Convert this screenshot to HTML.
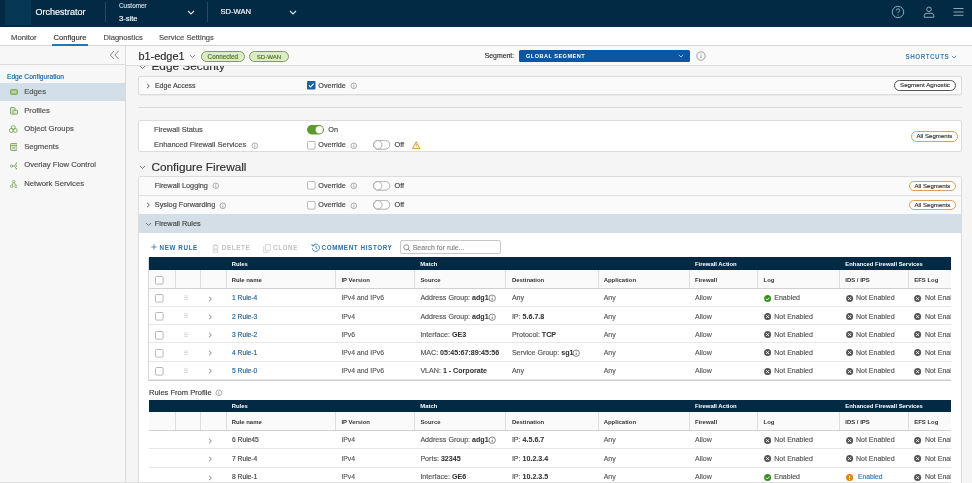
<!DOCTYPE html><html><head><meta charset="utf-8"><style>
html,body{margin:0;padding:0;width:972px;height:483px;overflow:hidden;background:#f5f5f5;}
body{position:relative;font-family:"Liberation Sans",sans-serif;-webkit-font-smoothing:antialiased;}
#root{position:absolute;left:0;top:0;width:972px;height:483px;will-change:transform;}
.t{position:absolute;white-space:nowrap;-webkit-text-stroke:0.15px currentColor;}
.b{position:absolute;display:block;}
</style></head><body><div id="root">
<div class="b" style="left:0px;top:0px;width:972px;height:27px;background:#022a45"></div>
<div class="b" style="left:5px;top:0px;width:26px;height:25px;background:#063753"></div>
<div class="t" style="left:35.5px;top:1.60px;line-height:20px;font-size:9.0px;color:#ffffff;font-weight:400;letter-spacing:0px;">Orchestrator</div>
<div class="b" style="left:105px;top:2px;width:1px;height:20px;background:#2a4a63"></div>
<div class="t" style="left:119px;top:-3.60px;line-height:20px;font-size:6.4px;color:#d5dee6;font-weight:400;letter-spacing:0px;">Customer</div>
<div class="t" style="left:119px;top:8.90px;line-height:20px;font-size:7.6px;color:#ffffff;font-weight:400;letter-spacing:0px;">3-site</div>
<svg class="b" style="left:186.7px;top:10px;" width="8" height="5" viewBox="0 0 8 5"><path d="M1 1 L4 4 L7 1" stroke="#dfe7ee" stroke-width="1.1" fill="none"/></svg>
<div class="b" style="left:207px;top:2px;width:1px;height:20px;background:#2a4a63"></div>
<div class="t" style="left:220.5px;top:2.20px;line-height:20px;font-size:7.6px;color:#ffffff;font-weight:400;letter-spacing:0px;">SD-WAN</div>
<svg class="b" style="left:289px;top:10px;" width="8" height="5" viewBox="0 0 8 5"><path d="M1 1 L4 4 L7 1" stroke="#dfe7ee" stroke-width="1.1" fill="none"/></svg>
<svg class="b" style="left:891px;top:5px;" width="14" height="14" viewBox="0 0 14 14"><circle cx="7" cy="7" r="5.7" stroke="#9fb4c4" stroke-width="0.9" fill="none"/><path d="M5.2 5.6 Q5.2 3.8 7 3.8 Q8.8 3.8 8.8 5.4 Q8.8 6.5 7.4 7 Q7 7.3 7 8.2" stroke="#9fb4c4" stroke-width="0.9" fill="none"/><circle cx="7" cy="10" r="0.55" fill="#9fb4c4"/></svg>
<svg class="b" style="left:922px;top:5px;" width="14" height="14" viewBox="0 0 14 14"><circle cx="7" cy="4.3" r="2.3" stroke="#9fb4c4" stroke-width="0.9" fill="none"/><path d="M2.2 12.3 L2.2 10.6 Q2.2 8.3 5 8.3 L9 8.3 Q11.8 8.3 11.8 10.6 L11.8 12.3 Z" stroke="#9fb4c4" stroke-width="0.9" fill="none"/></svg>
<svg class="b" style="left:953px;top:7px;" width="12" height="10" viewBox="0 0 12 10"><path d="M0.5 1.5 H10.5 M0.5 5 H10.5 M0.5 8.3 H10.5" stroke="#9fb4c4" stroke-width="0.9"/></svg>
<div class="b" style="left:0px;top:27px;width:972px;height:18px;background:#ffffff"></div>
<div class="b" style="left:0px;top:45px;width:972px;height:1px;background:#d6d6d6"></div>
<div class="t" style="left:11px;top:27.50px;line-height:20px;font-size:7.7px;color:#4a4a4a;font-weight:400;letter-spacing:0px;">Monitor</div>
<div class="t" style="left:53.5px;top:27.50px;line-height:20px;font-size:7.6px;color:#333333;font-weight:400;letter-spacing:0px;">Configure</div>
<div class="b" style="left:52px;top:44px;width:36px;height:2px;background:#1f77b4"></div>
<div class="t" style="left:103.5px;top:27.50px;line-height:20px;font-size:7.6px;color:#4a4a4a;font-weight:400;letter-spacing:0px;">Diagnostics</div>
<div class="t" style="left:159px;top:27.50px;line-height:20px;font-size:7.6px;color:#4a4a4a;font-weight:400;letter-spacing:0px;">Service Settings</div>
<div class="b" style="left:0px;top:46px;width:125px;height:437px;background:#f7f7f7"></div>
<div class="b" style="left:125px;top:46px;width:1px;height:437px;background:#d9d9d9"></div>
<div class="b" style="left:0px;top:64px;width:125px;height:1px;background:#dcdcdc"></div>
<svg class="b" style="left:109px;top:50px;" width="11" height="10" viewBox="0 0 11 10"><path d="M5 1 L1.3 5 L5 9 M9.5 1 L5.8 5 L9.5 9" stroke="#777" stroke-width="0.9" fill="none"/></svg>
<div class="t" style="left:7px;top:66.70px;line-height:20px;font-size:6.65px;color:#1a65a5;font-weight:500;letter-spacing:0px;">Edge Configuration</div>
<div class="b" style="left:0px;top:83px;width:125px;height:18px;background:#d2dee8"></div>
<div class="t" style="left:24.2px;top:82.30px;line-height:20px;font-size:7.7px;color:#4e4e4e;font-weight:400;letter-spacing:0px;">Edges</div>
<div class="t" style="left:24.2px;top:100.90px;line-height:20px;font-size:7.7px;color:#4e4e4e;font-weight:400;letter-spacing:0px;">Profiles</div>
<div class="t" style="left:24.2px;top:119.00px;line-height:20px;font-size:7.7px;color:#4e4e4e;font-weight:400;letter-spacing:0px;">Object Groups</div>
<div class="t" style="left:24.2px;top:137.40px;line-height:20px;font-size:7.7px;color:#4e4e4e;font-weight:400;letter-spacing:0px;">Segments</div>
<div class="t" style="left:24.2px;top:155.30px;line-height:20px;font-size:7.7px;color:#4e4e4e;font-weight:400;letter-spacing:0px;">Overlay Flow Control</div>
<div class="t" style="left:24.2px;top:173.50px;line-height:20px;font-size:7.7px;color:#4e4e4e;font-weight:400;letter-spacing:0px;">Network Services</div>
<svg class="b" style="left:9.6px;top:89.2px;" width="8" height="6" viewBox="0 0 8 6"><rect x="0.5" y="0.5" width="7" height="5" rx="1" stroke="#84ad60" stroke-width="1.0" fill="#9cc07c"/><path d="M2 3 H6" stroke="#e6efdc" stroke-width="0.9"/></svg>
<svg class="b" style="left:9.5px;top:107px;" width="8" height="7.5" viewBox="0 0 8 7.5"><rect x="0.5" y="0.5" width="4.6" height="6.5" rx="0.6" stroke="#84ad60" stroke-width="1.0" fill="#dbe8cf"/><rect x="3" y="3.3" width="4.5" height="3.8" rx="0.6" stroke="#84ad60" stroke-width="1.0" fill="#dbe8cf"/></svg>
<svg class="b" style="left:9.3px;top:125px;" width="8.5" height="8" viewBox="0 0 8.5 8"><circle cx="4.25" cy="2.6" r="2.0" stroke="#84ad60" stroke-width="1.0" fill="none"/><circle cx="2.4" cy="5.4" r="2.0" stroke="#84ad60" stroke-width="1.0" fill="none"/><circle cx="6.1" cy="5.4" r="2.0" stroke="#84ad60" stroke-width="1.0" fill="none"/></svg>
<svg class="b" style="left:9.6px;top:143.2px;" width="7.6" height="8" viewBox="0 0 7.6 8"><rect x="0.5" y="0.5" width="6.6" height="7" rx="0.8" stroke="#84ad60" stroke-width="1.0" fill="#dbe8cf"/><path d="M0.5 2.6 H7.1 M2.3 5 H5.3" stroke="#84ad60" stroke-width="1.0"/></svg>
<svg class="b" style="left:9.5px;top:161.5px;" width="7.5" height="8" viewBox="0 0 7.5 8"><circle cx="1.6" cy="4" r="1.2" stroke="#84ad60" stroke-width="0.9" fill="none"/><path d="M2.8 4 H4.4 M4.4 4 L6.4 1.3 M4.4 4 L6.4 6.7" stroke="#84ad60" stroke-width="0.9" fill="none"/><circle cx="6.5" cy="1.2" r="0.8" fill="#84ad60"/><circle cx="6.5" cy="6.8" r="0.8" fill="#84ad60"/><circle cx="6.5" cy="4" r="0.8" fill="#84ad60"/></svg>
<svg class="b" style="left:9.6px;top:179.8px;" width="7.6" height="8" viewBox="0 0 7.6 8"><circle cx="3.8" cy="1.6" r="1.2" stroke="#84ad60" stroke-width="0.9" fill="none"/><circle cx="1.6" cy="6.3" r="1.3" stroke="#84ad60" stroke-width="0.9" fill="none"/><circle cx="6" cy="6.3" r="1.3" stroke="#84ad60" stroke-width="0.9" fill="none"/><path d="M3.2 2.8 L2.3 5 M4.4 2.8 L5.3 5" stroke="#84ad60" stroke-width="0.9"/></svg>
<div class="b" style="left:126px;top:46px;width:846px;height:437px;background:#f5f5f5"></div>
<div class="t" style="left:151.5px;top:55.90px;line-height:20px;font-size:11.8px;color:#2d2d2d;font-weight:400;letter-spacing:0px;">Edge Security</div>
<svg class="b" style="left:139px;top:64.6px;" width="7" height="5" viewBox="0 0 7 5"><path d="M1 1 L3.5 3.5 L6 1" stroke="#666" stroke-width="0.9" fill="none"/></svg>
<div class="b" style="left:138px;top:75.5px;width:824px;height:19px;background:#fafafa;border:1px solid #dcdcdc;border-radius:2px;box-sizing:border-box;box-shadow:0 0.6px 0 #e2e2e2"></div>
<svg class="b" style="left:146px;top:82.5px;" width="5" height="6" viewBox="0 0 5 6"><path d="M1 0.8 L3.4 3 L1 5.2" stroke="#555" stroke-width="0.9" fill="none"/></svg>
<div class="t" style="left:154.9px;top:75.50px;line-height:20px;font-size:7.05px;color:#444;font-weight:500;letter-spacing:0px;">Edge Access</div>
<svg class="b" style="left:307px;top:81.3px;" width="9" height="9" viewBox="0 0 9 9"><rect x="0" y="0" width="8.5" height="8.5" rx="1" fill="#1b5fa6"/><path d="M2 4.4 L3.6 6 L6.6 2.6" stroke="#fff" stroke-width="1.1" fill="none"/></svg>
<div class="t" style="left:318.3px;top:75.60px;line-height:20px;font-size:7.2px;color:#444;font-weight:400;letter-spacing:0px;">Override</div>
<svg class="b" style="left:350.2px;top:82.2px;" width="7.6" height="7.6" viewBox="0 0 7.6 7.6"><circle cx="3.8" cy="3.8" r="2.8" stroke="#8a8a8a" stroke-width="0.7" fill="none"/><path d="M3.8 3.4 V5.4799999999999995" stroke="#8a8a8a" stroke-width="0.8"/><circle cx="3.8" cy="2.4" r="0.45" fill="#8a8a8a"/></svg>
<div class="b" style="left:894px;top:80px;width:62px;height:10.8px;background:#fff;border:1px solid #555;border-radius:6px;box-sizing:border-box"></div>
<div class="t" style="left:900px;top:75.40px;line-height:20px;font-size:6.2px;color:#333;font-weight:400;letter-spacing:0px;">Segment Agnostic</div>
<div class="b" style="left:138px;top:107px;width:824px;height:1px;background:#dadada"></div>
<div class="b" style="left:138px;top:120px;width:824px;height:31.5px;background:#ffffff;border:1px solid #dcdcdc;border-radius:2px;box-sizing:border-box"></div>
<div class="t" style="left:154px;top:119.60px;line-height:20px;font-size:7.45px;color:#4a4a4a;font-weight:400;letter-spacing:0px;">Firewall Status</div>
<svg class="b" style="left:306.8px;top:125px;" width="18" height="10" viewBox="0 0 18 10"><rect x="0" y="0" width="17" height="9.4" rx="4.7" fill="#5b9a2e"/><circle cx="12.3" cy="4.7" r="3.7" fill="#fff"/></svg>
<div class="t" style="left:328.3px;top:119.60px;line-height:20px;font-size:7.3px;color:#444;font-weight:400;letter-spacing:0px;">On</div>
<div class="t" style="left:154px;top:135.20px;line-height:20px;font-size:7.47px;color:#4a4a4a;font-weight:400;letter-spacing:0px;">Enhanced Firewall Services</div>
<svg class="b" style="left:251.2px;top:141.89999999999998px;" width="7.6" height="7.6" viewBox="0 0 7.6 7.6"><circle cx="3.8" cy="3.8" r="2.8" stroke="#8a8a8a" stroke-width="0.7" fill="none"/><path d="M3.8 3.4 V5.4799999999999995" stroke="#8a8a8a" stroke-width="0.8"/><circle cx="3.8" cy="2.4" r="0.45" fill="#8a8a8a"/></svg>
<svg class="b" style="left:307px;top:141px;" width="9" height="9" viewBox="0 0 9 9"><rect x="0.5" y="0.5" width="7.6" height="7.6" rx="1" fill="#fff" stroke="#a8a8a8" stroke-width="0.8"/></svg>
<div class="t" style="left:318.3px;top:135.20px;line-height:20px;font-size:7.2px;color:#444;font-weight:400;letter-spacing:0px;">Override</div>
<svg class="b" style="left:349.7px;top:141.89999999999998px;" width="7.6" height="7.6" viewBox="0 0 7.6 7.6"><circle cx="3.8" cy="3.8" r="2.8" stroke="#8a8a8a" stroke-width="0.7" fill="none"/><path d="M3.8 3.4 V5.4799999999999995" stroke="#8a8a8a" stroke-width="0.8"/><circle cx="3.8" cy="2.4" r="0.45" fill="#8a8a8a"/></svg>
<svg class="b" style="left:372.9px;top:140.2px;" width="18" height="10" viewBox="0 0 18 10"><rect x="0.4" y="0.4" width="16.4" height="8.8" rx="4.4" fill="#fff" stroke="#9a9a9a" stroke-width="0.8"/><circle cx="4.8" cy="4.8" r="4.2" fill="#fff" stroke="#9a9a9a" stroke-width="0.8"/></svg>
<div class="t" style="left:394.5px;top:135.20px;line-height:20px;font-size:7.3px;color:#444;font-weight:400;letter-spacing:0px;">Off</div>
<svg class="b" style="left:411.5px;top:141px;" width="10" height="9" viewBox="0 0 10 9"><path d="M4.2 0.8 L7.9 7.6 H0.5 Z" stroke="#d08a1c" stroke-width="0.9" fill="none" stroke-linejoin="round"/><path d="M4.2 3.1 V5.3" stroke="#d08a1c" stroke-width="0.9"/><circle cx="4.2" cy="6.4" r="0.45" fill="#d08a1c"/></svg>
<div class="b" style="left:910.7px;top:131px;width:47px;height:10.6px;background:#fff;border:1px solid #d9a15c;border-radius:6px;box-sizing:border-box"></div>
<div class="t" style="left:916.5px;top:126.30px;line-height:20px;font-size:6.1px;color:#333;font-weight:400;letter-spacing:0px;">All Segments</div>
<div class="t" style="left:151.4px;top:156.50px;line-height:20px;font-size:11.8px;color:#2d2d2d;font-weight:400;letter-spacing:0px;">Configure Firewall</div>
<svg class="b" style="left:139px;top:165px;" width="7" height="5" viewBox="0 0 7 5"><path d="M1 1 L3.5 3.5 L6 1" stroke="#666" stroke-width="0.9" fill="none"/></svg>
<div class="b" style="left:138px;top:176px;width:824px;height:310px;background:#ffffff;border:1px solid #dcdcdc;border-radius:2px;box-sizing:border-box"></div>
<div class="b" style="left:139px;top:177px;width:822px;height:18px;background:#fafafa"></div>
<div class="b" style="left:139px;top:195px;width:822px;height:1px;background:#e0e0e0"></div>
<div class="b" style="left:139px;top:196px;width:822px;height:18px;background:#fafafa"></div>
<div class="b" style="left:139px;top:214px;width:822px;height:18.6px;background:#d3dee7"></div>
<div class="t" style="left:154.8px;top:175.60px;line-height:20px;font-size:7.3px;color:#444;font-weight:500;letter-spacing:0px;">Firewall Logging</div>
<svg class="b" style="left:211.7px;top:182.2px;" width="7.6" height="7.6" viewBox="0 0 7.6 7.6"><circle cx="3.8" cy="3.8" r="2.8" stroke="#8a8a8a" stroke-width="0.7" fill="none"/><path d="M3.8 3.4 V5.4799999999999995" stroke="#8a8a8a" stroke-width="0.8"/><circle cx="3.8" cy="2.4" r="0.45" fill="#8a8a8a"/></svg>
<svg class="b" style="left:307px;top:181.3px;" width="9" height="9" viewBox="0 0 9 9"><rect x="0.5" y="0.5" width="7.6" height="7.6" rx="1" fill="#fff" stroke="#a8a8a8" stroke-width="0.8"/></svg>
<div class="t" style="left:318.3px;top:175.60px;line-height:20px;font-size:7.2px;color:#444;font-weight:400;letter-spacing:0px;">Override</div>
<svg class="b" style="left:349.7px;top:182.2px;" width="7.6" height="7.6" viewBox="0 0 7.6 7.6"><circle cx="3.8" cy="3.8" r="2.8" stroke="#8a8a8a" stroke-width="0.7" fill="none"/><path d="M3.8 3.4 V5.4799999999999995" stroke="#8a8a8a" stroke-width="0.8"/><circle cx="3.8" cy="2.4" r="0.45" fill="#8a8a8a"/></svg>
<svg class="b" style="left:372.9px;top:180.8px;" width="18" height="10" viewBox="0 0 18 10"><rect x="0.4" y="0.4" width="16.4" height="8.8" rx="4.4" fill="#fff" stroke="#9a9a9a" stroke-width="0.8"/><circle cx="4.8" cy="4.8" r="4.2" fill="#fff" stroke="#9a9a9a" stroke-width="0.8"/></svg>
<div class="t" style="left:394.5px;top:175.60px;line-height:20px;font-size:7.3px;color:#444;font-weight:400;letter-spacing:0px;">Off</div>
<div class="b" style="left:908.6px;top:180.8px;width:47px;height:10.4px;background:#fff;border:1px solid #d9a15c;border-radius:6px;box-sizing:border-box"></div>
<div class="t" style="left:914.5px;top:176.00px;line-height:20px;font-size:6.1px;color:#333;font-weight:400;letter-spacing:0px;">All Segments</div>
<svg class="b" style="left:146px;top:201.6px;" width="5" height="6" viewBox="0 0 5 6"><path d="M1 0.8 L3.4 3 L1 5.2" stroke="#555" stroke-width="0.9" fill="none"/></svg>
<div class="t" style="left:154.8px;top:195.00px;line-height:20px;font-size:7.3px;color:#444;font-weight:500;letter-spacing:0px;">Syslog Forwarding</div>
<svg class="b" style="left:218.7px;top:201.6px;" width="7.6" height="7.6" viewBox="0 0 7.6 7.6"><circle cx="3.8" cy="3.8" r="2.8" stroke="#8a8a8a" stroke-width="0.7" fill="none"/><path d="M3.8 3.4 V5.4799999999999995" stroke="#8a8a8a" stroke-width="0.8"/><circle cx="3.8" cy="2.4" r="0.45" fill="#8a8a8a"/></svg>
<svg class="b" style="left:307px;top:200.8px;" width="9" height="9" viewBox="0 0 9 9"><rect x="0.5" y="0.5" width="7.6" height="7.6" rx="1" fill="#fff" stroke="#a8a8a8" stroke-width="0.8"/></svg>
<div class="t" style="left:318.3px;top:195.00px;line-height:20px;font-size:7.2px;color:#444;font-weight:400;letter-spacing:0px;">Override</div>
<svg class="b" style="left:349.7px;top:201.6px;" width="7.6" height="7.6" viewBox="0 0 7.6 7.6"><circle cx="3.8" cy="3.8" r="2.8" stroke="#8a8a8a" stroke-width="0.7" fill="none"/><path d="M3.8 3.4 V5.4799999999999995" stroke="#8a8a8a" stroke-width="0.8"/><circle cx="3.8" cy="2.4" r="0.45" fill="#8a8a8a"/></svg>
<svg class="b" style="left:372.9px;top:200.3px;" width="18" height="10" viewBox="0 0 18 10"><rect x="0.4" y="0.4" width="16.4" height="8.8" rx="4.4" fill="#fff" stroke="#9a9a9a" stroke-width="0.8"/><circle cx="4.8" cy="4.8" r="4.2" fill="#fff" stroke="#9a9a9a" stroke-width="0.8"/></svg>
<div class="t" style="left:394.5px;top:195.00px;line-height:20px;font-size:7.3px;color:#444;font-weight:400;letter-spacing:0px;">Off</div>
<div class="b" style="left:908.6px;top:199.9px;width:47px;height:10.2px;background:#fff;border:1px solid #d9a15c;border-radius:6px;box-sizing:border-box"></div>
<div class="t" style="left:914.5px;top:195.00px;line-height:20px;font-size:6.1px;color:#333;font-weight:400;letter-spacing:0px;">All Segments</div>
<svg class="b" style="left:145px;top:221.8px;" width="7" height="5" viewBox="0 0 7 5"><path d="M1 1 L3.5 3.5 L6 1" stroke="#666" stroke-width="0.9" fill="none"/></svg>
<div class="t" style="left:154.8px;top:213.90px;line-height:20px;font-size:7.3px;color:#444;font-weight:500;letter-spacing:0px;">Firewall Rules</div>
<svg class="b" style="left:150.5px;top:244.4px;" width="6" height="6" viewBox="0 0 6 6"><path d="M3 0.3 V5.7 M0.3 3 H5.7" stroke="#2f6f9f" stroke-width="0.75"/></svg>
<div class="t" style="left:159.5px;top:237.80px;line-height:20px;font-size:6.3px;color:#2a6fa8;font-weight:700;letter-spacing:0.6px;-webkit-text-stroke:0;">NEW RULE</div>
<svg class="b" style="left:212px;top:243.5px;" width="7" height="9" viewBox="0 0 7 9"><path d="M0.5 1.8 H6.5 M2.5 1.8 V0.6 H4.5 V1.8 M1.2 2.2 V8.3 H5.8 V2.2 M2.8 3.5 V7 M4.2 3.5 V7" stroke="#c4c4c4" stroke-width="0.7" fill="none"/></svg>
<div class="t" style="left:221.8px;top:237.80px;line-height:20px;font-size:6.3px;color:#c0c0c0;font-weight:700;letter-spacing:0.6px;-webkit-text-stroke:0;">DELETE</div>
<svg class="b" style="left:263px;top:243.5px;" width="8" height="9" viewBox="0 0 8 9"><path d="M2.5 0.6 H7.3 V6.7 H2.5 Z M0.7 2.4 V8.4 H5.5" stroke="#c4c4c4" stroke-width="0.7" fill="none"/></svg>
<div class="t" style="left:273px;top:237.80px;line-height:20px;font-size:6.3px;color:#c0c0c0;font-weight:700;letter-spacing:0.6px;-webkit-text-stroke:0;">CLONE</div>
<svg class="b" style="left:310.5px;top:243.3px;" width="10" height="9" viewBox="0 0 10 9"><path d="M2 2.6 A3.6 3.6 0 1 1 1.3 5.2" stroke="#2a6fa8" stroke-width="0.8" fill="none"/><path d="M0.7 1 L1.6 3.2 L3.6 2.3" stroke="#2a6fa8" stroke-width="0.8" fill="none"/><path d="M5 2.8 V5 L6.4 6" stroke="#2a6fa8" stroke-width="0.8" fill="none"/></svg>
<div class="t" style="left:321.5px;top:237.80px;line-height:20px;font-size:6.3px;color:#2a6fa8;font-weight:700;letter-spacing:0.6px;-webkit-text-stroke:0;">COMMENT HISTORY</div>
<div class="b" style="left:399.6px;top:239.7px;width:101.4px;height:14.7px;background:#fff;border:1px solid #c8c8c8;border-radius:2px;box-sizing:border-box"></div>
<svg class="b" style="left:403px;top:243.5px;" width="8" height="8" viewBox="0 0 8 8"><circle cx="3.3" cy="3.3" r="2.6" stroke="#777" stroke-width="0.8" fill="none"/><path d="M5.2 5.2 L7.4 7.4" stroke="#777" stroke-width="0.8"/></svg>
<div class="t" style="left:412.7px;top:237.50px;line-height:20px;font-size:7.0px;color:#888;font-weight:400;letter-spacing:0px;">Search for rule...</div>
<div class="b" style="left:148.4px;top:257.2px;width:802.6px;height:124.3px;background:#d8d8d8;border-radius:2px"></div>
<div class="b" style="left:149.2px;top:257.2px;width:801.8px;height:122.5px;background:#fff"></div>
<div class="b" style="left:149.2px;top:257.2px;width:801.8px;height:12.5px;background:#022a45"></div>
<div class="t" style="left:231.7px;top:253.65px;line-height:20px;font-size:5.9px;color:#ffffff;font-weight:700;letter-spacing:0px;-webkit-text-stroke:0;">Rules</div>
<div class="t" style="left:420.3px;top:253.65px;line-height:20px;font-size:5.9px;color:#ffffff;font-weight:700;letter-spacing:0px;-webkit-text-stroke:0;">Match</div>
<div class="t" style="left:695px;top:253.65px;line-height:20px;font-size:5.9px;color:#ffffff;font-weight:700;letter-spacing:0px;-webkit-text-stroke:0;">Firewall Action</div>
<div class="t" style="left:845.3px;top:253.65px;line-height:20px;font-size:5.9px;color:#ffffff;font-weight:700;letter-spacing:0px;-webkit-text-stroke:0;">Enhanced Firewall Services</div>
<div class="b" style="left:149.2px;top:269.7px;width:801.8px;height:19px;background:#fafafa"></div>
<div class="b" style="left:149.2px;top:287.7px;width:801.8px;height:1px;background:#d0d0d0"></div>
<div class="b" style="left:174.7px;top:269.7px;width:0.8px;height:18px;background:#dedede"></div>
<div class="b" style="left:200.4px;top:269.7px;width:0.8px;height:18px;background:#dedede"></div>
<div class="b" style="left:225.5px;top:269.7px;width:0.8px;height:18px;background:#dedede"></div>
<div class="b" style="left:335.1px;top:269.7px;width:0.8px;height:18px;background:#dedede"></div>
<div class="b" style="left:413.6px;top:269.7px;width:0.8px;height:18px;background:#dedede"></div>
<div class="b" style="left:505.3px;top:269.7px;width:0.8px;height:18px;background:#dedede"></div>
<div class="b" style="left:597.5px;top:269.7px;width:0.8px;height:18px;background:#dedede"></div>
<div class="b" style="left:688.9px;top:269.7px;width:0.8px;height:18px;background:#dedede"></div>
<div class="b" style="left:757.4px;top:269.7px;width:0.8px;height:18px;background:#dedede"></div>
<div class="b" style="left:839px;top:269.7px;width:0.8px;height:18px;background:#dedede"></div>
<div class="b" style="left:907.5px;top:269.7px;width:0.8px;height:18px;background:#dedede"></div>
<svg class="b" style="left:155.3px;top:275.59999999999997px;" width="9" height="9" viewBox="0 0 9 9"><rect x="0.5" y="0.5" width="7.6" height="7.6" rx="1" fill="#fff" stroke="#a8a8a8" stroke-width="0.8"/></svg>
<div class="t" style="left:231.7px;top:269.50px;line-height:20px;font-size:5.95px;color:#333;font-weight:700;letter-spacing:0px;-webkit-text-stroke:0;">Rule name</div>
<div class="t" style="left:341.4px;top:269.50px;line-height:20px;font-size:5.95px;color:#333;font-weight:700;letter-spacing:0px;-webkit-text-stroke:0;">IP Version</div>
<div class="t" style="left:420.4px;top:269.50px;line-height:20px;font-size:5.95px;color:#333;font-weight:700;letter-spacing:0px;-webkit-text-stroke:0;">Source</div>
<div class="t" style="left:511.9px;top:269.50px;line-height:20px;font-size:5.95px;color:#333;font-weight:700;letter-spacing:0px;-webkit-text-stroke:0;">Destination</div>
<div class="t" style="left:603.7px;top:269.50px;line-height:20px;font-size:5.95px;color:#333;font-weight:700;letter-spacing:0px;-webkit-text-stroke:0;">Application</div>
<div class="t" style="left:695px;top:269.50px;line-height:20px;font-size:5.95px;color:#333;font-weight:700;letter-spacing:0px;-webkit-text-stroke:0;">Firewall</div>
<div class="t" style="left:763.6px;top:269.50px;line-height:20px;font-size:5.95px;color:#333;font-weight:700;letter-spacing:0px;-webkit-text-stroke:0;">Log</div>
<div class="t" style="left:845.3px;top:269.50px;line-height:20px;font-size:5.95px;color:#333;font-weight:700;letter-spacing:0px;-webkit-text-stroke:0;">IDS / IPS</div>
<div class="t" style="left:914.2px;top:269.50px;line-height:20px;font-size:5.95px;color:#333;font-weight:700;letter-spacing:0px;-webkit-text-stroke:0;">EFS Log</div>
<div class="b" style="left:149.2px;top:288.7px;width:801.8px;height:18.2px;background:#fff"></div>
<div class="b" style="left:149.2px;top:305.9px;width:801.8px;height:0.8px;background:#e8e8e8"></div>
<svg class="b" style="left:155.3px;top:294.1px;" width="9" height="9" viewBox="0 0 9 9"><rect x="0.5" y="0.5" width="7.6" height="7.6" rx="1" fill="#fff" stroke="#a8a8a8" stroke-width="0.8"/></svg>
<svg class="b" style="left:183.5px;top:295.1px;" width="4" height="6" viewBox="0 0 4 6"><path d="M1 0.5 V5.5 M3 0.5 V5.5" stroke="#9a9a9a" stroke-width="0.8" stroke-dasharray="0.9 0.8"/></svg>
<svg class="b" style="left:207.5px;top:295.5px;" width="5" height="6" viewBox="0 0 5 6"><path d="M1 0.8 L3.4 3 L1 5.2" stroke="#777" stroke-width="0.9" fill="none"/></svg>
<div class="t" style="left:232px;top:288.30px;line-height:20px;font-size:6.7px;color:#1b64a0;font-weight:400;letter-spacing:0px;">1 Rule-4</div>
<div class="t" style="left:341.4px;top:288.30px;line-height:20px;font-size:6.85px;color:#555;font-weight:400;letter-spacing:0px;-webkit-text-stroke:0.12px #555;">IPv4 and IPv6</div>
<div class="t" style="left:420.4px;top:288.30px;line-height:20px;font-size:7.1px;color:#555">Address Group: <b style="color:#333;font-weight:700;-webkit-text-stroke:0.05px #333">adg1</b></div>
<svg class="b" style="left:488.40000000000003px;top:294.3px;" width="8.4" height="8.4" viewBox="0 0 8.4 8.4"><circle cx="4.2" cy="4.2" r="3.2" stroke="#555" stroke-width="0.7" fill="none"/><path d="M4.2 3.8000000000000003 V6.12" stroke="#555" stroke-width="0.8"/><circle cx="4.2" cy="2.6" r="0.45" fill="#555"/></svg>
<div class="t" style="left:511.9px;top:288.30px;line-height:20px;font-size:7.1px;color:#555">Any<b style="color:#333;font-weight:700;-webkit-text-stroke:0.05px #333"></b></div>
<div class="t" style="left:603.7px;top:288.30px;line-height:20px;font-size:7.0px;color:#555;font-weight:400;letter-spacing:0px;-webkit-text-stroke:0.12px #555;">Any</div>
<div class="t" style="left:695px;top:288.30px;line-height:20px;font-size:7.0px;color:#555;font-weight:400;letter-spacing:0px;-webkit-text-stroke:0.12px #555;">Allow</div>
<svg class="b" style="left:763.8px;top:294.7px;" width="8" height="8" viewBox="0 0 8 8"><circle cx="3.6" cy="3.6" r="3.5" fill="#3d8f22"/><path d="M1.9 3.7 L3.2 5 L5.4 2.6" stroke="#fff" stroke-width="0.9" fill="none"/></svg>
<div class="t" style="left:774.3px;top:288.30px;line-height:20px;font-size:7.0px;color:#555;font-weight:400;letter-spacing:0px;">Enabled</div>
<svg class="b" style="left:845.5px;top:294.7px;" width="8" height="8" viewBox="0 0 8 8"><circle cx="3.6" cy="3.6" r="3.5" fill="#555"/><path d="M2.2 2.2 L5 5 M5 2.2 L2.2 5" stroke="#fff" stroke-width="0.9"/></svg>
<div class="t" style="left:856.0px;top:288.30px;line-height:20px;font-size:7.0px;color:#555;font-weight:400;letter-spacing:0px;">Not Enabled</div>
<svg class="b" style="left:914.4px;top:294.7px;" width="8" height="8" viewBox="0 0 8 8"><circle cx="3.6" cy="3.6" r="3.5" fill="#555"/><path d="M2.2 2.2 L5 5 M5 2.2 L2.2 5" stroke="#fff" stroke-width="0.9"/></svg>
<div class="t" style="left:924.9px;top:288.30px;line-height:20px;font-size:7.0px;color:#555;font-weight:400;letter-spacing:0px;">Not Enabled</div>
<div class="b" style="left:149.2px;top:306.9px;width:801.8px;height:18.2px;background:#fff"></div>
<div class="b" style="left:149.2px;top:324.09999999999997px;width:801.8px;height:0.8px;background:#e8e8e8"></div>
<svg class="b" style="left:155.3px;top:312.3px;" width="9" height="9" viewBox="0 0 9 9"><rect x="0.5" y="0.5" width="7.6" height="7.6" rx="1" fill="#fff" stroke="#a8a8a8" stroke-width="0.8"/></svg>
<svg class="b" style="left:183.5px;top:313.3px;" width="4" height="6" viewBox="0 0 4 6"><path d="M1 0.5 V5.5 M3 0.5 V5.5" stroke="#9a9a9a" stroke-width="0.8" stroke-dasharray="0.9 0.8"/></svg>
<svg class="b" style="left:207.5px;top:313.7px;" width="5" height="6" viewBox="0 0 5 6"><path d="M1 0.8 L3.4 3 L1 5.2" stroke="#777" stroke-width="0.9" fill="none"/></svg>
<div class="t" style="left:232px;top:306.50px;line-height:20px;font-size:6.7px;color:#1b64a0;font-weight:400;letter-spacing:0px;">2 Rule-3</div>
<div class="t" style="left:341.4px;top:306.50px;line-height:20px;font-size:6.85px;color:#555;font-weight:400;letter-spacing:0px;-webkit-text-stroke:0.12px #555;">IPv4</div>
<div class="t" style="left:420.4px;top:306.50px;line-height:20px;font-size:7.1px;color:#555">Address Group: <b style="color:#333;font-weight:700;-webkit-text-stroke:0.05px #333">adg1</b></div>
<svg class="b" style="left:488.40000000000003px;top:312.5px;" width="8.4" height="8.4" viewBox="0 0 8.4 8.4"><circle cx="4.2" cy="4.2" r="3.2" stroke="#555" stroke-width="0.7" fill="none"/><path d="M4.2 3.8000000000000003 V6.12" stroke="#555" stroke-width="0.8"/><circle cx="4.2" cy="2.6" r="0.45" fill="#555"/></svg>
<div class="t" style="left:511.9px;top:306.50px;line-height:20px;font-size:7.1px;color:#555">IP: <b style="color:#333;font-weight:700;-webkit-text-stroke:0.05px #333">5.6.7.8</b></div>
<div class="t" style="left:603.7px;top:306.50px;line-height:20px;font-size:7.0px;color:#555;font-weight:400;letter-spacing:0px;-webkit-text-stroke:0.12px #555;">Any</div>
<div class="t" style="left:695px;top:306.50px;line-height:20px;font-size:7.0px;color:#555;font-weight:400;letter-spacing:0px;-webkit-text-stroke:0.12px #555;">Allow</div>
<svg class="b" style="left:763.8px;top:312.9px;" width="8" height="8" viewBox="0 0 8 8"><circle cx="3.6" cy="3.6" r="3.5" fill="#555"/><path d="M2.2 2.2 L5 5 M5 2.2 L2.2 5" stroke="#fff" stroke-width="0.9"/></svg>
<div class="t" style="left:774.3px;top:306.50px;line-height:20px;font-size:7.0px;color:#555;font-weight:400;letter-spacing:0px;">Not Enabled</div>
<svg class="b" style="left:845.5px;top:312.9px;" width="8" height="8" viewBox="0 0 8 8"><circle cx="3.6" cy="3.6" r="3.5" fill="#555"/><path d="M2.2 2.2 L5 5 M5 2.2 L2.2 5" stroke="#fff" stroke-width="0.9"/></svg>
<div class="t" style="left:856.0px;top:306.50px;line-height:20px;font-size:7.0px;color:#555;font-weight:400;letter-spacing:0px;">Not Enabled</div>
<svg class="b" style="left:914.4px;top:312.9px;" width="8" height="8" viewBox="0 0 8 8"><circle cx="3.6" cy="3.6" r="3.5" fill="#555"/><path d="M2.2 2.2 L5 5 M5 2.2 L2.2 5" stroke="#fff" stroke-width="0.9"/></svg>
<div class="t" style="left:924.9px;top:306.50px;line-height:20px;font-size:7.0px;color:#555;font-weight:400;letter-spacing:0px;">Not Enabled</div>
<div class="b" style="left:149.2px;top:325.09999999999997px;width:801.8px;height:18.2px;background:#fff"></div>
<div class="b" style="left:149.2px;top:342.29999999999995px;width:801.8px;height:0.8px;background:#e8e8e8"></div>
<svg class="b" style="left:155.3px;top:330.5px;" width="9" height="9" viewBox="0 0 9 9"><rect x="0.5" y="0.5" width="7.6" height="7.6" rx="1" fill="#fff" stroke="#a8a8a8" stroke-width="0.8"/></svg>
<svg class="b" style="left:183.5px;top:331.5px;" width="4" height="6" viewBox="0 0 4 6"><path d="M1 0.5 V5.5 M3 0.5 V5.5" stroke="#9a9a9a" stroke-width="0.8" stroke-dasharray="0.9 0.8"/></svg>
<svg class="b" style="left:207.5px;top:331.9px;" width="5" height="6" viewBox="0 0 5 6"><path d="M1 0.8 L3.4 3 L1 5.2" stroke="#777" stroke-width="0.9" fill="none"/></svg>
<div class="t" style="left:232px;top:324.70px;line-height:20px;font-size:6.7px;color:#1b64a0;font-weight:400;letter-spacing:0px;">3 Rule-2</div>
<div class="t" style="left:341.4px;top:324.70px;line-height:20px;font-size:6.85px;color:#555;font-weight:400;letter-spacing:0px;-webkit-text-stroke:0.12px #555;">IPv6</div>
<div class="t" style="left:420.4px;top:324.70px;line-height:20px;font-size:7.1px;color:#555">Interface: <b style="color:#333;font-weight:700;-webkit-text-stroke:0.05px #333">GE3</b></div>
<div class="t" style="left:511.9px;top:324.70px;line-height:20px;font-size:7.1px;color:#555">Protocol: <b style="color:#333;font-weight:700;-webkit-text-stroke:0.05px #333">TCP</b></div>
<div class="t" style="left:603.7px;top:324.70px;line-height:20px;font-size:7.0px;color:#555;font-weight:400;letter-spacing:0px;-webkit-text-stroke:0.12px #555;">Any</div>
<div class="t" style="left:695px;top:324.70px;line-height:20px;font-size:7.0px;color:#555;font-weight:400;letter-spacing:0px;-webkit-text-stroke:0.12px #555;">Allow</div>
<svg class="b" style="left:763.8px;top:331.09999999999997px;" width="8" height="8" viewBox="0 0 8 8"><circle cx="3.6" cy="3.6" r="3.5" fill="#555"/><path d="M2.2 2.2 L5 5 M5 2.2 L2.2 5" stroke="#fff" stroke-width="0.9"/></svg>
<div class="t" style="left:774.3px;top:324.70px;line-height:20px;font-size:7.0px;color:#555;font-weight:400;letter-spacing:0px;">Not Enabled</div>
<svg class="b" style="left:845.5px;top:331.09999999999997px;" width="8" height="8" viewBox="0 0 8 8"><circle cx="3.6" cy="3.6" r="3.5" fill="#555"/><path d="M2.2 2.2 L5 5 M5 2.2 L2.2 5" stroke="#fff" stroke-width="0.9"/></svg>
<div class="t" style="left:856.0px;top:324.70px;line-height:20px;font-size:7.0px;color:#555;font-weight:400;letter-spacing:0px;">Not Enabled</div>
<svg class="b" style="left:914.4px;top:331.09999999999997px;" width="8" height="8" viewBox="0 0 8 8"><circle cx="3.6" cy="3.6" r="3.5" fill="#555"/><path d="M2.2 2.2 L5 5 M5 2.2 L2.2 5" stroke="#fff" stroke-width="0.9"/></svg>
<div class="t" style="left:924.9px;top:324.70px;line-height:20px;font-size:7.0px;color:#555;font-weight:400;letter-spacing:0px;">Not Enabled</div>
<div class="b" style="left:149.2px;top:343.29999999999995px;width:801.8px;height:18.2px;background:#fff"></div>
<div class="b" style="left:149.2px;top:360.49999999999994px;width:801.8px;height:0.8px;background:#e8e8e8"></div>
<svg class="b" style="left:155.3px;top:348.7px;" width="9" height="9" viewBox="0 0 9 9"><rect x="0.5" y="0.5" width="7.6" height="7.6" rx="1" fill="#fff" stroke="#a8a8a8" stroke-width="0.8"/></svg>
<svg class="b" style="left:183.5px;top:349.7px;" width="4" height="6" viewBox="0 0 4 6"><path d="M1 0.5 V5.5 M3 0.5 V5.5" stroke="#9a9a9a" stroke-width="0.8" stroke-dasharray="0.9 0.8"/></svg>
<svg class="b" style="left:207.5px;top:350.09999999999997px;" width="5" height="6" viewBox="0 0 5 6"><path d="M1 0.8 L3.4 3 L1 5.2" stroke="#777" stroke-width="0.9" fill="none"/></svg>
<div class="t" style="left:232px;top:342.90px;line-height:20px;font-size:6.7px;color:#1b64a0;font-weight:400;letter-spacing:0px;">4 Rule-1</div>
<div class="t" style="left:341.4px;top:342.90px;line-height:20px;font-size:6.85px;color:#555;font-weight:400;letter-spacing:0px;-webkit-text-stroke:0.12px #555;">IPv4 and IPv6</div>
<div class="t" style="left:420.4px;top:342.90px;line-height:20px;font-size:7.1px;color:#555">MAC: <b style="color:#333;font-weight:700;-webkit-text-stroke:0.05px #333">05:45:67:89:45:56</b></div>
<div class="t" style="left:511.9px;top:342.90px;line-height:20px;font-size:7.1px;color:#555">Service Group: <b style="color:#333;font-weight:700;-webkit-text-stroke:0.05px #333">sg1</b></div>
<svg class="b" style="left:572.3px;top:348.9px;" width="8.4" height="8.4" viewBox="0 0 8.4 8.4"><circle cx="4.2" cy="4.2" r="3.2" stroke="#555" stroke-width="0.7" fill="none"/><path d="M4.2 3.8000000000000003 V6.12" stroke="#555" stroke-width="0.8"/><circle cx="4.2" cy="2.6" r="0.45" fill="#555"/></svg>
<div class="t" style="left:603.7px;top:342.90px;line-height:20px;font-size:7.0px;color:#555;font-weight:400;letter-spacing:0px;-webkit-text-stroke:0.12px #555;">Any</div>
<div class="t" style="left:695px;top:342.90px;line-height:20px;font-size:7.0px;color:#555;font-weight:400;letter-spacing:0px;-webkit-text-stroke:0.12px #555;">Allow</div>
<svg class="b" style="left:763.8px;top:349.29999999999995px;" width="8" height="8" viewBox="0 0 8 8"><circle cx="3.6" cy="3.6" r="3.5" fill="#555"/><path d="M2.2 2.2 L5 5 M5 2.2 L2.2 5" stroke="#fff" stroke-width="0.9"/></svg>
<div class="t" style="left:774.3px;top:342.90px;line-height:20px;font-size:7.0px;color:#555;font-weight:400;letter-spacing:0px;">Not Enabled</div>
<svg class="b" style="left:845.5px;top:349.29999999999995px;" width="8" height="8" viewBox="0 0 8 8"><circle cx="3.6" cy="3.6" r="3.5" fill="#555"/><path d="M2.2 2.2 L5 5 M5 2.2 L2.2 5" stroke="#fff" stroke-width="0.9"/></svg>
<div class="t" style="left:856.0px;top:342.90px;line-height:20px;font-size:7.0px;color:#555;font-weight:400;letter-spacing:0px;">Not Enabled</div>
<svg class="b" style="left:914.4px;top:349.29999999999995px;" width="8" height="8" viewBox="0 0 8 8"><circle cx="3.6" cy="3.6" r="3.5" fill="#555"/><path d="M2.2 2.2 L5 5 M5 2.2 L2.2 5" stroke="#fff" stroke-width="0.9"/></svg>
<div class="t" style="left:924.9px;top:342.90px;line-height:20px;font-size:7.0px;color:#555;font-weight:400;letter-spacing:0px;">Not Enabled</div>
<div class="b" style="left:149.2px;top:361.5px;width:801.8px;height:18.2px;background:#fff"></div>
<div class="b" style="left:149.2px;top:378.7px;width:801.8px;height:0.8px;background:#e8e8e8"></div>
<svg class="b" style="left:155.3px;top:366.90000000000003px;" width="9" height="9" viewBox="0 0 9 9"><rect x="0.5" y="0.5" width="7.6" height="7.6" rx="1" fill="#fff" stroke="#a8a8a8" stroke-width="0.8"/></svg>
<svg class="b" style="left:183.5px;top:367.90000000000003px;" width="4" height="6" viewBox="0 0 4 6"><path d="M1 0.5 V5.5 M3 0.5 V5.5" stroke="#9a9a9a" stroke-width="0.8" stroke-dasharray="0.9 0.8"/></svg>
<svg class="b" style="left:207.5px;top:368.3px;" width="5" height="6" viewBox="0 0 5 6"><path d="M1 0.8 L3.4 3 L1 5.2" stroke="#777" stroke-width="0.9" fill="none"/></svg>
<div class="t" style="left:232px;top:361.10px;line-height:20px;font-size:6.7px;color:#1b64a0;font-weight:400;letter-spacing:0px;">5 Rule-0</div>
<div class="t" style="left:341.4px;top:361.10px;line-height:20px;font-size:6.85px;color:#555;font-weight:400;letter-spacing:0px;-webkit-text-stroke:0.12px #555;">IPv4 and IPv6</div>
<div class="t" style="left:420.4px;top:361.10px;line-height:20px;font-size:7.1px;color:#555">VLAN: <b style="color:#333;font-weight:700;-webkit-text-stroke:0.05px #333">1 - Corporate</b></div>
<div class="t" style="left:511.9px;top:361.10px;line-height:20px;font-size:7.1px;color:#555">Any<b style="color:#333;font-weight:700;-webkit-text-stroke:0.05px #333"></b></div>
<div class="t" style="left:603.7px;top:361.10px;line-height:20px;font-size:7.0px;color:#555;font-weight:400;letter-spacing:0px;-webkit-text-stroke:0.12px #555;">Any</div>
<div class="t" style="left:695px;top:361.10px;line-height:20px;font-size:7.0px;color:#555;font-weight:400;letter-spacing:0px;-webkit-text-stroke:0.12px #555;">Allow</div>
<svg class="b" style="left:763.8px;top:367.5px;" width="8" height="8" viewBox="0 0 8 8"><circle cx="3.6" cy="3.6" r="3.5" fill="#555"/><path d="M2.2 2.2 L5 5 M5 2.2 L2.2 5" stroke="#fff" stroke-width="0.9"/></svg>
<div class="t" style="left:774.3px;top:361.10px;line-height:20px;font-size:7.0px;color:#555;font-weight:400;letter-spacing:0px;">Not Enabled</div>
<svg class="b" style="left:845.5px;top:367.5px;" width="8" height="8" viewBox="0 0 8 8"><circle cx="3.6" cy="3.6" r="3.5" fill="#555"/><path d="M2.2 2.2 L5 5 M5 2.2 L2.2 5" stroke="#fff" stroke-width="0.9"/></svg>
<div class="t" style="left:856.0px;top:361.10px;line-height:20px;font-size:7.0px;color:#555;font-weight:400;letter-spacing:0px;">Not Enabled</div>
<svg class="b" style="left:914.4px;top:367.5px;" width="8" height="8" viewBox="0 0 8 8"><circle cx="3.6" cy="3.6" r="3.5" fill="#555"/><path d="M2.2 2.2 L5 5 M5 2.2 L2.2 5" stroke="#fff" stroke-width="0.9"/></svg>
<div class="t" style="left:924.9px;top:361.10px;line-height:20px;font-size:7.0px;color:#555;font-weight:400;letter-spacing:0px;">Not Enabled</div>
<div class="b" style="left:148.4px;top:379.7px;width:802.6px;height:1.8px;background:#cdcdcd;border-radius:0 0 0 2px"></div>
<div class="t" style="left:149.1px;top:382.80px;line-height:20px;font-size:7.55px;color:#3a3a3a;font-weight:500;letter-spacing:0px;">Rules From Profile</div>
<svg class="b" style="left:215.2px;top:389.2px;" width="7.6" height="7.6" viewBox="0 0 7.6 7.6"><circle cx="3.8" cy="3.8" r="2.8" stroke="#8a8a8a" stroke-width="0.7" fill="none"/><path d="M3.8 3.4 V5.4799999999999995" stroke="#8a8a8a" stroke-width="0.8"/><circle cx="3.8" cy="2.4" r="0.45" fill="#8a8a8a"/></svg>
<div class="b" style="left:149.2px;top:399.6px;width:801.8px;height:12.2px;background:#022a45"></div>
<div class="t" style="left:231.7px;top:395.90px;line-height:20px;font-size:5.9px;color:#ffffff;font-weight:700;letter-spacing:0px;-webkit-text-stroke:0;">Rules</div>
<div class="t" style="left:420.3px;top:395.90px;line-height:20px;font-size:5.9px;color:#ffffff;font-weight:700;letter-spacing:0px;-webkit-text-stroke:0;">Match</div>
<div class="t" style="left:695px;top:395.90px;line-height:20px;font-size:5.9px;color:#ffffff;font-weight:700;letter-spacing:0px;-webkit-text-stroke:0;">Firewall Action</div>
<div class="t" style="left:845.3px;top:395.90px;line-height:20px;font-size:5.9px;color:#ffffff;font-weight:700;letter-spacing:0px;-webkit-text-stroke:0;">Enhanced Firewall Services</div>
<div class="b" style="left:149.2px;top:411.8px;width:801.8px;height:18.8px;background:#fafafa"></div>
<div class="b" style="left:149.2px;top:429.6px;width:801.8px;height:1px;background:#d0d0d0"></div>
<div class="b" style="left:174.7px;top:411.8px;width:0.8px;height:17.8px;background:#dedede"></div>
<div class="b" style="left:200.4px;top:411.8px;width:0.8px;height:17.8px;background:#dedede"></div>
<div class="b" style="left:225.5px;top:411.8px;width:0.8px;height:17.8px;background:#dedede"></div>
<div class="b" style="left:335.1px;top:411.8px;width:0.8px;height:17.8px;background:#dedede"></div>
<div class="b" style="left:413.6px;top:411.8px;width:0.8px;height:17.8px;background:#dedede"></div>
<div class="b" style="left:505.3px;top:411.8px;width:0.8px;height:17.8px;background:#dedede"></div>
<div class="b" style="left:597.5px;top:411.8px;width:0.8px;height:17.8px;background:#dedede"></div>
<div class="b" style="left:688.9px;top:411.8px;width:0.8px;height:17.8px;background:#dedede"></div>
<div class="b" style="left:757.4px;top:411.8px;width:0.8px;height:17.8px;background:#dedede"></div>
<div class="b" style="left:839px;top:411.8px;width:0.8px;height:17.8px;background:#dedede"></div>
<div class="b" style="left:907.5px;top:411.8px;width:0.8px;height:17.8px;background:#dedede"></div>
<div class="t" style="left:231.7px;top:411.50px;line-height:20px;font-size:5.95px;color:#333;font-weight:700;letter-spacing:0px;-webkit-text-stroke:0;">Rule name</div>
<div class="t" style="left:341.4px;top:411.50px;line-height:20px;font-size:5.95px;color:#333;font-weight:700;letter-spacing:0px;-webkit-text-stroke:0;">IP Version</div>
<div class="t" style="left:420.4px;top:411.50px;line-height:20px;font-size:5.95px;color:#333;font-weight:700;letter-spacing:0px;-webkit-text-stroke:0;">Source</div>
<div class="t" style="left:511.9px;top:411.50px;line-height:20px;font-size:5.95px;color:#333;font-weight:700;letter-spacing:0px;-webkit-text-stroke:0;">Destination</div>
<div class="t" style="left:603.7px;top:411.50px;line-height:20px;font-size:5.95px;color:#333;font-weight:700;letter-spacing:0px;-webkit-text-stroke:0;">Application</div>
<div class="t" style="left:695px;top:411.50px;line-height:20px;font-size:5.95px;color:#333;font-weight:700;letter-spacing:0px;-webkit-text-stroke:0;">Firewall</div>
<div class="t" style="left:763.6px;top:411.50px;line-height:20px;font-size:5.95px;color:#333;font-weight:700;letter-spacing:0px;-webkit-text-stroke:0;">Log</div>
<div class="t" style="left:845.3px;top:411.50px;line-height:20px;font-size:5.95px;color:#333;font-weight:700;letter-spacing:0px;-webkit-text-stroke:0;">IDS / IPS</div>
<div class="t" style="left:914.2px;top:411.50px;line-height:20px;font-size:5.95px;color:#333;font-weight:700;letter-spacing:0px;-webkit-text-stroke:0;">EFS Log</div>
<div class="b" style="left:149.2px;top:430.6px;width:801.8px;height:18.5px;background:#fff"></div>
<div class="b" style="left:149.2px;top:448.1px;width:801.8px;height:0.8px;background:#e8e8e8"></div>
<svg class="b" style="left:207.5px;top:437.55px;" width="5" height="6" viewBox="0 0 5 6"><path d="M1 0.8 L3.4 3 L1 5.2" stroke="#777" stroke-width="0.9" fill="none"/></svg>
<div class="t" style="left:232px;top:430.35px;line-height:20px;font-size:6.7px;color:#444;font-weight:400;letter-spacing:0px;">6 Rule45</div>
<div class="t" style="left:341.4px;top:430.35px;line-height:20px;font-size:6.85px;color:#555;font-weight:400;letter-spacing:0px;-webkit-text-stroke:0.12px #555;">IPv4</div>
<div class="t" style="left:420.4px;top:430.35px;line-height:20px;font-size:7.1px;color:#555">Address Group: <b style="color:#333;font-weight:700;-webkit-text-stroke:0.05px #333">adg1</b></div>
<svg class="b" style="left:488.40000000000003px;top:436.35px;" width="8.4" height="8.4" viewBox="0 0 8.4 8.4"><circle cx="4.2" cy="4.2" r="3.2" stroke="#555" stroke-width="0.7" fill="none"/><path d="M4.2 3.8000000000000003 V6.12" stroke="#555" stroke-width="0.8"/><circle cx="4.2" cy="2.6" r="0.45" fill="#555"/></svg>
<div class="t" style="left:511.9px;top:430.35px;line-height:20px;font-size:7.1px;color:#555">IP: <b style="color:#333;font-weight:700;-webkit-text-stroke:0.05px #333">4.5.6.7</b></div>
<div class="t" style="left:603.7px;top:430.35px;line-height:20px;font-size:7.0px;color:#555;font-weight:400;letter-spacing:0px;-webkit-text-stroke:0.12px #555;">Any</div>
<div class="t" style="left:695px;top:430.35px;line-height:20px;font-size:7.0px;color:#555;font-weight:400;letter-spacing:0px;-webkit-text-stroke:0.12px #555;">Allow</div>
<svg class="b" style="left:763.8px;top:436.75px;" width="8" height="8" viewBox="0 0 8 8"><circle cx="3.6" cy="3.6" r="3.5" fill="#555"/><path d="M2.2 2.2 L5 5 M5 2.2 L2.2 5" stroke="#fff" stroke-width="0.9"/></svg>
<div class="t" style="left:774.3px;top:430.35px;line-height:20px;font-size:7.0px;color:#555;font-weight:400;letter-spacing:0px;">Not Enabled</div>
<svg class="b" style="left:845.5px;top:436.75px;" width="8" height="8" viewBox="0 0 8 8"><circle cx="3.6" cy="3.6" r="3.5" fill="#555"/><path d="M2.2 2.2 L5 5 M5 2.2 L2.2 5" stroke="#fff" stroke-width="0.9"/></svg>
<div class="t" style="left:856.0px;top:430.35px;line-height:20px;font-size:7.0px;color:#555;font-weight:400;letter-spacing:0px;">Not Enabled</div>
<svg class="b" style="left:914.4px;top:436.75px;" width="8" height="8" viewBox="0 0 8 8"><circle cx="3.6" cy="3.6" r="3.5" fill="#555"/><path d="M2.2 2.2 L5 5 M5 2.2 L2.2 5" stroke="#fff" stroke-width="0.9"/></svg>
<div class="t" style="left:924.9px;top:430.35px;line-height:20px;font-size:7.0px;color:#555;font-weight:400;letter-spacing:0px;">Not Enabled</div>
<div class="b" style="left:149.2px;top:449.1px;width:801.8px;height:18.5px;background:#fff"></div>
<div class="b" style="left:149.2px;top:466.6px;width:801.8px;height:0.8px;background:#e8e8e8"></div>
<svg class="b" style="left:207.5px;top:456.05px;" width="5" height="6" viewBox="0 0 5 6"><path d="M1 0.8 L3.4 3 L1 5.2" stroke="#777" stroke-width="0.9" fill="none"/></svg>
<div class="t" style="left:232px;top:448.85px;line-height:20px;font-size:6.7px;color:#444;font-weight:400;letter-spacing:0px;">7 Rule-4</div>
<div class="t" style="left:341.4px;top:448.85px;line-height:20px;font-size:6.85px;color:#555;font-weight:400;letter-spacing:0px;-webkit-text-stroke:0.12px #555;">IPv4</div>
<div class="t" style="left:420.4px;top:448.85px;line-height:20px;font-size:7.1px;color:#555">Ports: <b style="color:#333;font-weight:700;-webkit-text-stroke:0.05px #333">32345</b></div>
<div class="t" style="left:511.9px;top:448.85px;line-height:20px;font-size:7.1px;color:#555">IP: <b style="color:#333;font-weight:700;-webkit-text-stroke:0.05px #333">10.2.3.4</b></div>
<div class="t" style="left:603.7px;top:448.85px;line-height:20px;font-size:7.0px;color:#555;font-weight:400;letter-spacing:0px;-webkit-text-stroke:0.12px #555;">Any</div>
<div class="t" style="left:695px;top:448.85px;line-height:20px;font-size:7.0px;color:#555;font-weight:400;letter-spacing:0px;-webkit-text-stroke:0.12px #555;">Allow</div>
<svg class="b" style="left:763.8px;top:455.25px;" width="8" height="8" viewBox="0 0 8 8"><circle cx="3.6" cy="3.6" r="3.5" fill="#555"/><path d="M2.2 2.2 L5 5 M5 2.2 L2.2 5" stroke="#fff" stroke-width="0.9"/></svg>
<div class="t" style="left:774.3px;top:448.85px;line-height:20px;font-size:7.0px;color:#555;font-weight:400;letter-spacing:0px;">Not Enabled</div>
<svg class="b" style="left:845.5px;top:455.25px;" width="8" height="8" viewBox="0 0 8 8"><circle cx="3.6" cy="3.6" r="3.5" fill="#555"/><path d="M2.2 2.2 L5 5 M5 2.2 L2.2 5" stroke="#fff" stroke-width="0.9"/></svg>
<div class="t" style="left:856.0px;top:448.85px;line-height:20px;font-size:7.0px;color:#555;font-weight:400;letter-spacing:0px;">Not Enabled</div>
<svg class="b" style="left:914.4px;top:455.25px;" width="8" height="8" viewBox="0 0 8 8"><circle cx="3.6" cy="3.6" r="3.5" fill="#555"/><path d="M2.2 2.2 L5 5 M5 2.2 L2.2 5" stroke="#fff" stroke-width="0.9"/></svg>
<div class="t" style="left:924.9px;top:448.85px;line-height:20px;font-size:7.0px;color:#555;font-weight:400;letter-spacing:0px;">Not Enabled</div>
<div class="b" style="left:149.2px;top:467.6px;width:801.8px;height:18.5px;background:#fff"></div>
<div class="b" style="left:149.2px;top:485.1px;width:801.8px;height:0.8px;background:#e8e8e8"></div>
<svg class="b" style="left:207.5px;top:474.55px;" width="5" height="6" viewBox="0 0 5 6"><path d="M1 0.8 L3.4 3 L1 5.2" stroke="#777" stroke-width="0.9" fill="none"/></svg>
<div class="t" style="left:232px;top:467.35px;line-height:20px;font-size:6.7px;color:#444;font-weight:400;letter-spacing:0px;">8 Rule-1</div>
<div class="t" style="left:341.4px;top:467.35px;line-height:20px;font-size:6.85px;color:#555;font-weight:400;letter-spacing:0px;-webkit-text-stroke:0.12px #555;">IPv4</div>
<div class="t" style="left:420.4px;top:467.35px;line-height:20px;font-size:7.1px;color:#555">Interface: <b style="color:#333;font-weight:700;-webkit-text-stroke:0.05px #333">GE6</b></div>
<div class="t" style="left:511.9px;top:467.35px;line-height:20px;font-size:7.1px;color:#555">IP: <b style="color:#333;font-weight:700;-webkit-text-stroke:0.05px #333">10.2.3.5</b></div>
<div class="t" style="left:603.7px;top:467.35px;line-height:20px;font-size:7.0px;color:#555;font-weight:400;letter-spacing:0px;-webkit-text-stroke:0.12px #555;">Any</div>
<div class="t" style="left:695px;top:467.35px;line-height:20px;font-size:7.0px;color:#555;font-weight:400;letter-spacing:0px;-webkit-text-stroke:0.12px #555;">Allow</div>
<svg class="b" style="left:763.8px;top:473.75px;" width="8" height="8" viewBox="0 0 8 8"><circle cx="3.6" cy="3.6" r="3.5" fill="#3d8f22"/><path d="M1.9 3.7 L3.2 5 L5.4 2.6" stroke="#fff" stroke-width="0.9" fill="none"/></svg>
<div class="t" style="left:774.3px;top:467.35px;line-height:20px;font-size:7.0px;color:#555;font-weight:400;letter-spacing:0px;">Enabled</div>
<svg class="b" style="left:845.5px;top:473.75px;" width="8" height="8" viewBox="0 0 8 8"><circle cx="3.6" cy="3.6" r="3.5" fill="#d9860f"/><path d="M3.6 1.7 V4.1" stroke="#fff" stroke-width="1"/><circle cx="3.6" cy="5.4" r="0.55" fill="#fff"/></svg>
<div class="t" style="left:858.0px;top:467.35px;line-height:20px;font-size:6.7px;color:#3a78ab;font-weight:400;letter-spacing:0px;">Enabled</div>
<svg class="b" style="left:914.4px;top:473.75px;" width="8" height="8" viewBox="0 0 8 8"><circle cx="3.6" cy="3.6" r="3.5" fill="#555"/><path d="M2.2 2.2 L5 5 M5 2.2 L2.2 5" stroke="#fff" stroke-width="0.9"/></svg>
<div class="t" style="left:924.9px;top:467.35px;line-height:20px;font-size:7.0px;color:#555;font-weight:400;letter-spacing:0px;">Not Enabled</div>
<div class="b" style="left:0px;top:482px;width:972px;height:1px;background:#dedede"></div>
<div class="b" style="left:951px;top:250px;width:10.5px;height:233px;background:#ffffff"></div>
<div class="b" style="left:961px;top:176.5px;width:1px;height:310px;background:#dcdcdc"></div>
<div class="b" style="left:962px;top:176.5px;width:10px;height:310px;background:#f5f5f5"></div>
<div class="b" style="left:126px;top:46px;width:846px;height:18.5px;background:#fafafa"></div>
<div class="b" style="left:126px;top:64.5px;width:846px;height:1px;background:#dedede"></div>
<div class="t" style="left:138.5px;top:46.20px;line-height:20px;font-size:10.9px;color:#2b2b2b;font-weight:400;letter-spacing:0px;">b1-edge1</div>
<svg class="b" style="left:189px;top:54px;" width="7" height="5" viewBox="0 0 7 5"><path d="M1 1 L3.5 3.5 L6 1" stroke="#777" stroke-width="0.9" fill="none"/></svg>
<div class="b" style="left:200.7px;top:51.3px;width:44px;height:10.6px;background:#dcedc6;border:1px solid #7f9c5e;border-radius:6px;box-sizing:border-box"></div>
<div class="t" style="left:207.6px;top:46.60px;line-height:20px;font-size:6.3px;color:#4c6b2e;font-weight:400;letter-spacing:0px;">Connected</div>
<div class="b" style="left:249.3px;top:51.3px;width:39.3px;height:10.6px;background:#dcedc6;border:1px solid #7f9c5e;border-radius:6px;box-sizing:border-box"></div>
<div class="t" style="left:256.7px;top:46.60px;line-height:20px;font-size:6.1px;color:#4c6b2e;font-weight:400;letter-spacing:0px;">SD-WAN</div>
<div class="t" style="left:484.7px;top:46.00px;line-height:20px;font-size:6.9px;color:#333;font-weight:400;letter-spacing:0px;">Segment:</div>
<div class="b" style="left:519px;top:50px;width:171px;height:12px;background:#0b57a4;border-radius:1.5px"></div>
<div class="t" style="left:526px;top:46.20px;line-height:20px;font-size:5.6px;color:#ffffff;font-weight:700;letter-spacing:0.45px;-webkit-text-stroke:0;">GLOBAL SEGMENT</div>
<svg class="b" style="left:678px;top:54px;" width="6" height="4" viewBox="0 0 6 4"><path d="M0.8 0.8 L3 3 L5.2 0.8" stroke="#cfe0f2" stroke-width="0.8" fill="none"/></svg>
<svg class="b" style="left:696px;top:51px;" width="10" height="10" viewBox="0 0 10 10"><circle cx="5" cy="5" r="4.2" stroke="#888" stroke-width="0.8" fill="none"/><path d="M5 4.3 V7.3" stroke="#888" stroke-width="0.9"/><circle cx="5" cy="2.9" r="0.5" fill="#888"/></svg>
<div class="t" style="left:905.5px;top:47.00px;line-height:20px;font-size:6.3px;color:#3a82b9;font-weight:700;letter-spacing:0.5px;-webkit-text-stroke:0;">SHORTCUTS</div>
<svg class="b" style="left:950.5px;top:55.2px;" width="6" height="4" viewBox="0 0 6 4"><path d="M0.8 0.8 L3 3 L5.2 0.8" stroke="#2f7cb6" stroke-width="0.8" fill="none"/></svg>
</div></body></html>
